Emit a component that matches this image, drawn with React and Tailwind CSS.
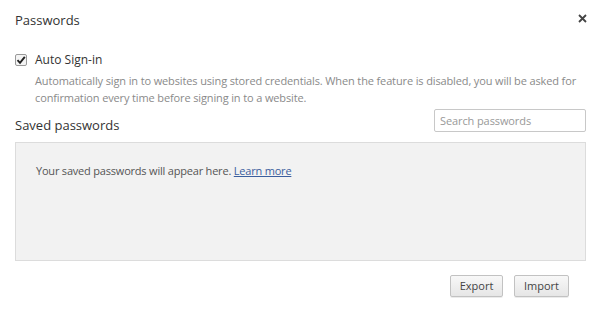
export default function App() {
  return (
    <div
      className="w-[600px] h-[320px] bg-white text-[#333] flex flex-col pl-[15px] pr-[14px]"
      style={{ fontFamily: '"Open Sans", "Noto Sans", sans-serif' }}
    >
      <div className="flex items-start justify-between pt-[11px]">
        <div className="text-[13px] leading-[18px] text-[#333]">Passwords</div>
        <button className="mt-[2px] -mr-[1px] w-[10px] h-[10px] flex items-center justify-center text-[#555]">
          <svg width="9" height="9" viewBox="0 0 9 9">
            <path d="M1 1 L8 8 M8 1 L1 8" stroke="#444" strokeWidth="1.8" />
          </svg>
        </button>
      </div>

      <div className="mt-[23px] flex items-center gap-[8px]">
        <div className="w-[12px] h-[12px] border border-[#999] rounded-[2px] bg-[#f4f4f4] flex items-center justify-center">
          <svg width="10" height="10" viewBox="0 0 10 10">
            <path d="M1.5 5.2 L4 7.8 L8.8 1.8" stroke="#222" strokeWidth="1.9" fill="none" />
          </svg>
        </div>
        <span className="text-[12px] leading-[16px] text-[#333]">Auto Sign-in</span>
      </div>
      <p className="ml-[20px] mt-[4px] text-[11px] leading-[17px] tracking-[-0.13px] text-[#8a8a8a]">
        Automatically sign in to websites using stored credentials. When the feature is disabled, you will be asked for
        confirmation every time before signing in to a website.
      </p>

      <div className="mt-[1px] flex items-center justify-between">
        <div className="text-[13px] leading-[18px] text-[#333] mt-[9px]">Saved passwords</div>
        <input
          placeholder="Search passwords"
          className="w-[152px] h-[23px] border border-[#c8c8c8] rounded-[2px] px-[5px] text-[11px] tracking-[-0.1px] placeholder:text-[#999] outline-none"
        />
      </div>

      <div className="mt-[8px] h-[119px] bg-[#f2f2f2] border border-[#dcdcdc] pl-[20px] pt-[20px]">
        <p className="text-[11px] leading-[16px] tracking-[-0.2px] text-[#555]">
          Your saved passwords will appear here.{" "}
          <a href="#" className="text-[#3b5e9e] underline">
            Learn more
          </a>
        </p>
      </div>

      <div className="mt-[14px] flex justify-end gap-[11px] pr-[17px]">
        <button className="w-[53px] h-[22px] border border-[#c2c2c2] rounded-[2px] bg-gradient-to-b from-[#f8f8f8] to-[#e6e6e6] text-[11px] text-[#444] shadow-[0_1px_0_rgba(0,0,0,0.08)]">
          Export
        </button>
        <button className="w-[55px] h-[22px] border border-[#c2c2c2] rounded-[2px] bg-gradient-to-b from-[#f8f8f8] to-[#e6e6e6] text-[11px] text-[#444] shadow-[0_1px_0_rgba(0,0,0,0.08)]">
          Import
        </button>
      </div>
    </div>
  );
}
